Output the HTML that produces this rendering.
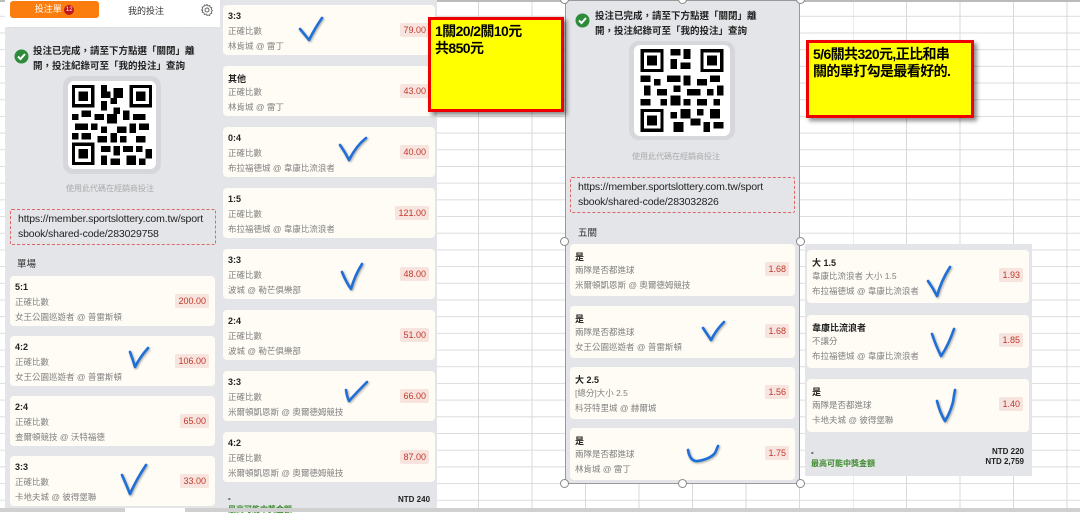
<!DOCTYPE html>
<html><head><meta charset="utf-8">
<style>
*{margin:0;padding:0;box-sizing:border-box}
body{width:1080px;height:512px;overflow:hidden;position:relative;background:#fff;font-family:"Liberation Sans","Noto Sans CJK TC",sans-serif}
.grid{position:absolute;left:0;top:0;width:1080px;height:508px;
background-image:linear-gradient(to right,#d9d9d9 1px,transparent 1px),linear-gradient(to bottom,#dcdcdc 1px,transparent 1px);
background-size:53.5px 16.7px;background-position:50px 15.8px}
.abs{position:absolute}
.panel{position:absolute;background:#e4e5e9}
.card{position:absolute;background:#fefcf4;border-radius:4px}
.card .t{position:absolute;left:5px;top:6px;font-size:9px;font-weight:bold;color:#222}
.card .s{position:absolute;left:5px;top:20px;font-size:8.5px;color:#808080;white-space:nowrap}
.card .m{position:absolute;left:5px;top:35px;font-size:8.5px;color:#808080;white-space:nowrap}
.card .o{position:absolute;right:6px;top:18px;font-size:9px;color:#c0392b;background:#f8e4df;padding:2px 3px;border-radius:2px}
.msg{font-size:9.5px;font-weight:bold;color:#222;line-height:15px}
.url{position:absolute;border:1px dashed #d66;border-radius:2px;font-size:10.5px;color:#222;line-height:15px;padding:2px 7px;white-space:nowrap;letter-spacing:-0.15px}
.hint{position:absolute;font-size:8px;color:#aaa}
.sec{position:absolute;font-size:9.5px;color:#333}
.note{position:absolute;background:#ffff00;border:3px solid #e00;box-shadow:3px 3px 4px rgba(0,0,0,.45);font-size:14px;color:#000;line-height:17px;padding:3px 4px;letter-spacing:-0.6px;font-weight:bold;font-family:"Liberation Sans Narrow","Liberation Sans","Noto Sans CJK TC",sans-serif}
.h{position:absolute;width:9px;height:9px;border-radius:50%;background:#fff;border:1px solid #888}
svg.tk{position:absolute;left:0;top:0;overflow:visible}
</style></head><body>
<div class="grid"></div>
<div class="abs" style="left:0;top:0;width:1080px;height:2px;background:#bbb"></div>

<!-- Panel 1 -->
<div class="panel" style="left:5px;top:0;width:215px;height:508px"></div>
<div class="abs" style="left:5px;top:0;width:215px;height:27px;background:#fff"></div>
<div class="abs" style="left:10px;top:1px;width:89px;height:17px;background:#fb7d0f;border-radius:3px;color:#fff;font-size:9px;text-align:center;line-height:17px">投注單 <span style="display:inline-block;width:10px;height:10px;border-radius:50%;background:#c0161b;font-size:6px;line-height:10px;vertical-align:1px">12</span></div>
<div class="abs" style="left:128px;top:4px;font-size:9px;color:#333">我的投注</div>
<svg class="abs" style="left:199px;top:2px" width="16" height="16" viewBox="0 0 16 16"><circle cx="8" cy="8" r="7.5" fill="#fff"/><circle cx="8" cy="8" r="2" fill="none" stroke="#666" stroke-width="1"/><path d="M8 2.5l1 1.5 1.7-.5.4 1.7 1.7.5-.5 1.7 1.2 1.1-1.2 1.1.5 1.7-1.7.5-.4 1.7-1.7-.5L8 13.5l-1-1.5-1.7.5-.4-1.7-1.7-.5.5-1.7L2.5 8l1.2-1.1-.5-1.7 1.7-.5.4-1.7 1.7.5z" fill="none" stroke="#666" stroke-width=".9"/></svg>
<div class="abs" style="left:8px;top:27px;width:209px;border-top:1px dashed #ddd"></div>
<svg class="abs" style="left:14px;top:49px" width="15" height="15"><circle cx="7.5" cy="7.5" r="7" fill="#2e8b3a"/><path d="M4 7.5l2.5 2.5 4.5-5" stroke="#fff" stroke-width="2" fill="none"/></svg>
<div class="abs msg" style="left:33px;top:44px;width:172px">投注已完成，請至下方點選「關閉」離開，投注紀錄可至「我的投注」查詢</div>
<div class="abs" style="left:63px;top:76px;width:98px;height:98px;background:#d6d7db;border-radius:10px"></div>
<div class="abs" style="left:68px;top:81px;width:88px;height:88px;background:#fff;border-radius:6px"></div>
<svg class="abs" style="left:72px;top:84px" width="80" height="82" viewBox="0 0 25 25" shape-rendering="crispEdges">
<g fill="#000"><path d="M0 0h7v7H0zM1 1v5h5V1zM2 2h3v3H2z" fill-rule="evenodd"/><path d="M18 0h7v7h-7zM19 1v5h5V1zM20 2h3v3h-3z" fill-rule="evenodd"/><path d="M0 18h7v7H0zM1 19v5h5v-5zM2 20h3v3H2z" fill-rule="evenodd"/>
<path d="M9 0h2v2h1v2h-3zM13 1h3v3h-2v2h-2V4h1zM9 5h2v3H9zM13 7h2v2h-2zM0 9h2v2H0zM3 8h3v2H3zM7 9h3v2H7zM11 9h3v3h-3zM16 8h2v3h-2zM19 9h4v2h-4zM1 12h4v2H1zM6 12h2v2H6zM9 13h2v2H9zM14 13h3v2h-3zM18 12h2v3h-2zM21 12h3v2h-3zM0 15h2v2H0zM3 15h3v2H3zM8 16h3v2H8zM12 15h2v3h-2zM15 16h2v2h-2zM20 16h3v2h-3zM9 19h3v2H9zM13 19h2v3h-2zM16 19h3v2h-3zM20 19h2v2h-2zM23 20h2v3h-2zM9 22h2v3H9zM12 23h3v2h-3zM17 22h3v3h-3zM21 23h2v2h-2z"/></g></svg>
<div class="hint" style="left:66px;top:183px">使用此代碼在經銷商投注</div>
<div class="url" style="left:10px;top:209px;width:206px;height:36px">https://member.sportslottery.com.tw/sport<br>sbook/shared-code/283029758</div>
<div class="sec" style="left:17px;top:256px">單場</div>

<div class="card" style="left:10px;top:276px;width:205px;height:50px"><div class="t">5:1</div><div class="s">正確比數</div><div class="m">女王公園巡遊者 @ 普雷斯頓</div><div class="o">200.00</div></div>
<div class="card" style="left:10px;top:336px;width:205px;height:50px"><div class="t">4:2</div><div class="s">正確比數</div><div class="m">女王公園巡遊者 @ 普雷斯頓</div><div class="o">106.00</div></div>
<div class="card" style="left:10px;top:396px;width:205px;height:50px"><div class="t">2:4</div><div class="s">正確比數</div><div class="m">查爾頓競技 @ 沃特福德</div><div class="o">65.00</div></div>
<div class="card" style="left:10px;top:456px;width:205px;height:50px"><div class="t">3:3</div><div class="s">正確比數</div><div class="m">卡地夫城 @ 彼得堡聯</div><div class="o">33.00</div></div>

<!-- Panel 2 -->
<div class="panel" style="left:220px;top:0;width:217px;height:508px"></div>
<div class="card" style="left:223px;top:5px;width:212px;height:50px"><div class="t">3:3</div><div class="s">正確比數</div><div class="m">林肯城 @ 雷丁</div><div class="o">79.00</div></div>
<div class="card" style="left:223px;top:66px;width:212px;height:50px"><div class="t">其他</div><div class="s">正確比數</div><div class="m">林肯城 @ 雷丁</div><div class="o">43.00</div></div>
<div class="card" style="left:223px;top:127px;width:212px;height:50px"><div class="t">0:4</div><div class="s">正確比數</div><div class="m">布拉福德城 @ 韋康比流浪者</div><div class="o">40.00</div></div>
<div class="card" style="left:223px;top:188px;width:212px;height:50px"><div class="t">1:5</div><div class="s">正確比數</div><div class="m">布拉福德城 @ 韋康比流浪者</div><div class="o">121.00</div></div>
<div class="card" style="left:223px;top:249px;width:212px;height:50px"><div class="t">3:3</div><div class="s">正確比數</div><div class="m">波城 @ 勒芒俱樂部</div><div class="o">48.00</div></div>
<div class="card" style="left:223px;top:310px;width:212px;height:50px"><div class="t">2:4</div><div class="s">正確比數</div><div class="m">波城 @ 勒芒俱樂部</div><div class="o">51.00</div></div>
<div class="card" style="left:223px;top:371px;width:212px;height:50px"><div class="t">3:3</div><div class="s">正確比數</div><div class="m">米爾頓凱恩斯 @ 奧爾德姆競技</div><div class="o">66.00</div></div>
<div class="card" style="left:223px;top:432px;width:212px;height:50px"><div class="t">4:2</div><div class="s">正確比數</div><div class="m">米爾頓凱恩斯 @ 奧爾德姆競技</div><div class="o">87.00</div></div>
<div class="abs" style="left:228px;top:494px;font-size:8px;font-weight:bold">-</div>
<div class="abs" style="left:398px;top:495px;font-size:8px;font-weight:bold;color:#222">NTD 240</div>
<div class="abs" style="left:228px;top:504px;font-size:8px;font-weight:bold;color:#3a8a2a">最高可能中獎金額</div>

<!-- Panel 3 -->
<div class="panel" style="left:565px;top:0;width:235px;height:484px;border:1px solid #999"></div>
<svg class="abs" style="left:575px;top:13px" width="15" height="15"><circle cx="7.5" cy="7.5" r="7" fill="#2e8b3a"/><path d="M4 7.5l2.5 2.5 4.5-5" stroke="#fff" stroke-width="2" fill="none"/></svg>
<div class="abs msg" style="left:595px;top:9px;width:172px">投注已完成，請至下方點選「關閉」離開，投注紀錄可至「我的投注」查詢</div>
<div class="abs" style="left:629px;top:41px;width:106px;height:99px;background:#d6d7db;border-radius:10px"></div>
<div class="abs" style="left:634px;top:45px;width:96px;height:91px;background:#fff;border-radius:6px"></div>
<svg class="abs" style="left:638px;top:49px" width="88" height="83" viewBox="0 0 25 25" shape-rendering="crispEdges">
<g fill="#000"><path d="M0 0h7v7H0zM1 1v5h5V1zM2 2h3v3H2z" fill-rule="evenodd"/><path d="M18 0h7v7h-7zM19 1v5h5V1zM20 2h3v3h-3z" fill-rule="evenodd"/><path d="M0 18h7v7H0zM1 19v5h5v-5zM2 20h3v3H2z" fill-rule="evenodd"/>
<path d="M9 0h3v2H9zM13 0h2v3h-2zM9 3h2v3H9zM12 4h3v2h-3zM0 8h3v2H0zM4 9h2v2H4zM8 8h4v2H8zM13 8h2v3h-2zM17 9h3v2h-3zM21 8h3v2h-3zM1 11h2v3H1zM5 12h3v2H5zM10 11h2v2h-2zM14 12h4v2h-4zM20 12h2v2h-2zM23 11h2v3h-2zM0 15h3v2H0zM6 15h2v2H6zM9 14h3v3H9zM13 15h2v2h-2zM17 15h3v2h-3zM22 15h2v2h-2zM9 19h2v2H9zM12 18h3v3h-3zM17 18h2v2h-2zM21 18h3v3h-3zM10 22h3v3h-3zM15 21h3v2h-3zM19 22h2v3h-2zM22 22h3v2h-3z"/></g></svg>
<div class="hint" style="left:632px;top:151px">使用此代碼在經銷商投注</div>
<div class="url" style="left:570px;top:177px;width:225px;height:36px">https://member.sportslottery.com.tw/sport<br>sbook/shared-code/283032826</div>
<div class="sec" style="left:578px;top:225px">五關</div>
<div class="card" style="left:570px;top:244px;width:225px;height:52px"><div class="t">是</div><div class="s">兩隊是否都進球</div><div class="m">米爾頓凱恩斯 @ 奧爾德姆競技</div><div class="o">1.68</div></div>
<div class="card" style="left:570px;top:306px;width:225px;height:52px"><div class="t">是</div><div class="s">兩隊是否都進球</div><div class="m">女王公園巡遊者 @ 普雷斯頓</div><div class="o">1.68</div></div>
<div class="card" style="left:570px;top:367px;width:225px;height:52px"><div class="t">大 2.5</div><div class="s">[總分]大小 2.5</div><div class="m">科芬特里城 @ 赫爾城</div><div class="o">1.56</div></div>
<div class="card" style="left:570px;top:428px;width:225px;height:52px"><div class="t">是</div><div class="s">兩隊是否都進球</div><div class="m">林肯城 @ 雷丁</div><div class="o">1.75</div></div>
<div class="h" style="left:560px;top:-5px"></div><div class="h" style="left:678px;top:-5px"></div><div class="h" style="left:796px;top:-5px"></div>
<div class="h" style="left:560px;top:237px"></div><div class="h" style="left:796px;top:237px"></div>
<div class="h" style="left:560px;top:479px"></div><div class="h" style="left:678px;top:479px"></div><div class="h" style="left:796px;top:479px"></div>

<!-- Panel 4 -->
<div class="panel" style="left:805px;top:244px;width:227px;height:232px"></div>
<div class="card" style="left:807px;top:250px;width:222px;height:53px"><div class="t">大 1.5</div><div class="s">韋康比流浪者 大小 1.5</div><div class="m">布拉福德城 @ 韋康比流浪者</div><div class="o">1.93</div></div>
<div class="card" style="left:807px;top:315px;width:222px;height:53px"><div class="t">韋康比流浪者</div><div class="s">不讓分</div><div class="m">布拉福德城 @ 韋康比流浪者</div><div class="o">1.85</div></div>
<div class="card" style="left:807px;top:379px;width:222px;height:53px"><div class="t">是</div><div class="s">兩隊是否都進球</div><div class="m">卡地夫城 @ 彼得堡聯</div><div class="o">1.40</div></div>
<div class="abs" style="left:811px;top:448px;font-size:8px;font-weight:bold">-</div>
<div class="abs" style="left:811px;top:458px;font-size:8px;font-weight:bold;color:#3a8a2a">最高可能中獎金額</div>
<div class="abs" style="right:56px;top:447px;font-size:8px;font-weight:bold;color:#222;text-align:right;line-height:10px">NTD 220<br>NTD 2,759</div>

<!-- Notes -->
<div class="note" style="left:428px;top:17px;width:136px;height:95px">1關20/2關10元<br>共850元</div>
<div class="note" style="left:806px;top:40px;width:168px;height:78px">5/6關共320元,正比和串<br>關的單打勾是最看好的.</div>

<!-- Ticks -->
<svg class="tk" width="1080" height="512"><g fill="none" stroke="#1f6fd8" stroke-width="2.6" stroke-linecap="round" stroke-linejoin="round" style="filter:drop-shadow(1px 1px 1px rgba(0,0,0,.35))">
<path d="M300 29q5 6 9 11q6-12 13-22"/>
<path d="M340 145q5 7 9 15q7-14 17-22"/>
<path d="M342 272q4 10 9 17q4-14 11-25"/>
<path d="M346 390q1 7 3 11q8-9 18-19"/>
<path d="M130 352q3 8 5 15q5-10 13-19"/>
<path d="M122 475q4 9 8 19q6-14 16-29"/>
<path d="M703 328q4 6 8 12q5-10 13-18"/>
<path d="M688 450q2 12 10 11q12-2 17-8l3-7"/>
<path d="M928 281q5 7 9 15q4-15 13-29"/>
<path d="M932 334q4 12 9 22q7-10 13-27"/>
<path d="M937 401q3 12 8 20q5-8 8-19q1-7 2-12"/>
</g></svg>

<!-- bottom sheet bar -->
<div class="abs" style="left:0;top:508px;width:1080px;height:4px;background:#d0d0d0"></div>
<div class="abs" style="left:125px;top:508px;width:60px;height:4px;background:#fff"></div>
</body></html>
